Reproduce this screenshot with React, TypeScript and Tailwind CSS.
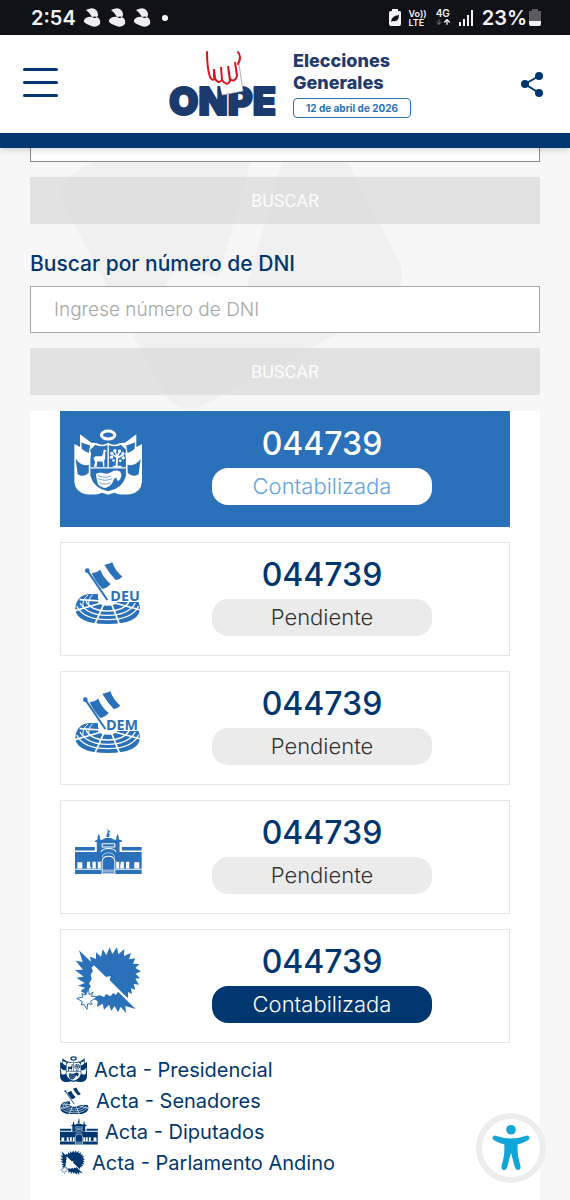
import React from 'react';
import { ArrowDown, ArrowUp } from 'lucide-react';

type IconProps = { className?: string; cut?: string };

const EscudoIcon: React.FC<IconProps> = ({ className, cut = 'fill-white' }) => {
  const line = cut === 'fill-white' ? 'stroke-white' : 'stroke-[#2a71b9]';
  return (
    <svg viewBox="60 74 203 196" className={className} fill="currentColor" aria-hidden="true">
      <ellipse cx="162" cy="92" rx="20" ry="12" fill="none" stroke="currentColor" strokeWidth="9" />
      <path d="M78 90 L112 115 L126 116 Q146 126 162 115 Q178 126 198 116 L212 115 L246 90 V128 L263 119 V232 Q260 262 228 269 Q196 272 180 264 L162 270 L144 264 Q128 272 96 269 Q64 262 61 232 V119 L78 128 Z" />
      <g className={cut}>
        <path d="M82 114 L108 123 L104 146 Q92 142 83 133 Z" />
        <path d="M242 114 L216 123 L220 146 Q232 142 241 133 Z" />
        <path d="M65 163 Q80 186 104 181 V205 Q90 220 71 209 Z" />
        <path d="M259 163 Q244 186 220 181 V205 Q234 220 253 209 Z" />
        <path d="M108 137 L124 121 Q144 131 162 120 Q180 131 200 121 L216 137 Q210 150 215 163 V214 Q204 252 162 260 Q120 252 109 214 V163 Q114 150 108 137 Z" />
      </g>
      <path d="M162 118 V190 M109 190 H215" fill="none" stroke="currentColor" strokeWidth="4" />
      <path d="M118 161 L124 155 L143 155 L147 148 L148 138 L151 135 L158 140 L153 143 L153 163 L150 168 L151 187 H147 L145 171 L129 171 L128 187 H119 L123 173 Z" />
      <path d="M184 187 L186 160 L172 151 L174 148 L185 154 L180 139 L184 138 L188 151 L196 138 L199 141 L192 155 L207 148 L209 152 L191 163 L190 187 Z" />
      <g>
        <circle cx="173" cy="147" r="5" />
        <circle cx="182" cy="139" r="5" />
        <circle cx="196" cy="140" r="5" />
        <circle cx="206" cy="148" r="5" />
        <circle cx="172" cy="158" r="5" />
        <circle cx="207" cy="160" r="5" />
        <circle cx="178" cy="168" r="4" />
        <circle cx="198" cy="169" r="4" />
        <path d="M176 184 H202 V188 H176 Z" />
      </g>
      <path d="M126 216 Q122 202 143 205 Q161 211 173 202 Q186 194 198 202 Q207 216 193 229 Q186 228 187 219 Q178 221 177 229 Q173 244 153 250 Q132 246 131 236 Q128 224 126 216 Z" />
      <path d="M130 212 Q151 224 171 214 M132 222 Q153 232 174 222 M136 234 Q155 243 170 234" fill="none" strokeWidth="2" className={line} />
    </svg>
  );
};

const SenadoIcon: React.FC<IconProps & { label?: string }> = ({ className, label }) => (
  <svg viewBox="59 62 198 190" className={className} fill="currentColor" aria-hidden="true">
    <path d="M60 206 Q62 162 108 161 H206 Q252 162 254 206 Q250 251 157 251 Q64 251 60 206 Z" />
    <g fill="none" stroke="white" strokeWidth="4">
      <path d="M64 197 Q84 238 157 238 Q230 238 250 197" />
      <path d="M74 188 Q95 225 157 225 Q219 225 240 188" />
      <path d="M92 183 Q108 212 157 212 Q206 212 222 183" />
      <path d="M84 201 Q78 180 98 164 M103 198 Q94 180 112 163" strokeWidth="3" />
      <path strokeWidth="5" d="M138 188 L58 211 M146 190 L118 253 M168 190 L193 253 M178 188 L256 209 M138 182 L73 178 M176 182 L243 181" />
    </g>
    <ellipse cx="157" cy="184" rx="29" ry="12" fill="white" />
    <path d="M126 150 H262 V185 H180 L150 190 L129 178 Z" fill="white" />
    <g transform={label === 'DEM' ? 'translate(-6 0)' : undefined}>
      <path d="M96 91 L156 179" stroke="currentColor" strokeWidth="6" />
      <circle cx="96" cy="91" r="7" />
      <path d="M109 99 Q125 97 135 88 Q144 113 166 131 Q156 143 141 146 Q120 124 109 99 Z" />
      <path d="M147 73 Q161 72 171 66 Q179 91 201 109 Q193 118 181 119 Q163 101 147 73 Z" />
    </g>
    {label && (
      <text x={label === 'DEM' ? 152 : 165} y="181" fontSize="43" className="font-bold" fontFamily="Open Sans, sans-serif">
        {label}
      </text>
    )}
  </svg>
);

const CongresoIcon: React.FC<IconProps> = ({ className }) => (
  <svg viewBox="57 81 200 140" className={className} fill="currentColor" aria-hidden="true">
    <path d="M57 138 H116 V148 H57 Z M197 138 H256 V148 H197 Z M57 153 H256 V220 H57 Z" />
    <path d="M118 118 L124 115 L125 106 L128 98 L131 106 L132 115 L137 117 Q156 103 176 117 L180 115 L181 106 L184 98 L187 106 L188 115 L197 118 V123 H190 V153 H122 V123 H116 Z" />
    <path d="M151 102 L155 92 L154 81 L157 88 L163 92 L157 96 L161 101 L158 108 H151 Z" />
    <g fill="none" stroke="white">
      <rect x="138" y="128" width="38" height="10" rx="2" strokeWidth="3" />
      <path d="M134 153 Q139 142 157 142 Q175 142 180 153" strokeWidth="3" />
      <path d="M138 168 Q142 155 157 155 Q172 155 176 168" strokeWidth="2" />
      <path d="M138 220 V180 Q140 165 157 165 Q174 165 176 180 V220" strokeWidth="3" />
      <path d="M57 204 H136 M178 204 H256" strokeWidth="3" />
      <path d="M140 207 H174 M140 212 H174 M140 217 H174" strokeWidth="2" />
    </g>
    <path
      fill="white"
      d="M64 183 H79 V202 H64 Z M93 182 H102 V194 L105 202 H92 Z M109 182 H119 V202 H109 Z M125 182 H134 V202 H125 Z M180 182 H189 V202 H180 Z M194 182 H203 V202 H192 V194 Z M209 182 H219 V202 H209 Z M234 183 H249 V202 H234 Z"
    />
  </svg>
);

const ParlamentoIcon: React.FC<IconProps> = ({ className }) => (
  <svg viewBox="58 62 198 198" className={className} fill="currentColor" aria-hidden="true">
    <path d="M106 108 L103 91 L121 98 L121 78 L136 91 L141 69 L152 86 L162 63 L170 83 L184 63 L188 84 L206 68 L205 89 L226 80 L220 99 L239 96 L232 112 L251 113 L239 125 L256 135 L240 142 L253 155 L239 157 L250 175 L234 173 L239 190 L226 186 L229 203 L217 197 L217 215 L207 207 L162 162 L165 149 L151 152 Z" />
    <path d="M70 72 L116 116 L107 124 L112 133 L105 145 L108 158 L100 172 L106 180 L98 190 L94 208 L86 201 L75 194 L88 184 L67 178 L87 170 L62 154 L84 151 L58 131 L82 130 L60 103 L81 107 Z" />
    <path d="M113 217 L131 206 L145 212 L151 203 L164 210 L173 200 L181 206 L187 196 L240 248 L209 239 L211 260 L195 241 L187 258 L177 239 L167 253 L160 235 L145 250 L141 232 L124 242 L126 225 Z" />
    <path d="M98 187 L101 206 L112 197 L107 210 L126 211 L104 225 L110 234 L96 232 L94 249 L85 234 L77 236 L80 226 L63 216 L82 212 L78 202 L90 206 Z" fill="white" stroke="currentColor" strokeWidth="3" />
  </svg>
);

const PersonIcon = () => (
  <svg viewBox="0 0 40 50" className="h-12 w-10 text-[#12a5d8]" fill="currentColor" aria-hidden="true">
    <circle cx="20" cy="6" r="5" />
    <path d="M3 12 Q20 18 37 12 Q40 13 39 16 Q34 20 27 21 Q26 31 30 44 Q30 48 27 48 Q25 48 24 45 L20 30 L16 45 Q15 48 12 48 Q10 47 10 44 Q14 31 13 21 Q6 20 1 16 Q0 13 3 12 Z" />
  </svg>
);

const BeanIcon = () => (
  <svg viewBox="0 0 18 20" className="h-5 w-[18px]" fill="#eeeef1" aria-hidden="true">
    <path d="M3 2 Q11 -2 14 3 Q16 7 14 9 Q18 11 17 16 Q13 21 6 17 Q0 15 1 12 Q4 8 9 9 Q6 4 3 2 Z" />
    <path d="M9 9 Q12 8 14 9 Q12 11 9 9 Z" fill="#111217" />
  </svg>
);

const StatusBar = () => (
  <div className="flex h-[35px] items-center justify-between bg-[#111217] pr-[29px] pl-[31px] text-[#f3f3f5]">
    <div className="flex items-center gap-[7px]">
      <span className="text-xl font-semibold">2:54</span>
      <BeanIcon />
      <BeanIcon />
      <BeanIcon />
      <span className="ml-1 h-1.5 w-1.5 rounded-full bg-white" />
    </div>
    <div className="flex items-center gap-2">
      <svg viewBox="0 0 12 17" className="h-[17px] w-3" aria-hidden="true">
        <path d="M3 0 H9 V2 H11 Q12 2 12 4 V15 Q12 17 10 17 H2 Q0 17 0 15 V4 Q0 2 2 2 H3 Z" fill="#f3f3f5" />
        <path d="M2 13 Q2 7 10 6 Q10 13 4 12 M3 13 L7 9" fill="#111217" />
      </svg>
      <div className="text-[9px] leading-[9px] font-semibold">
        <div>Vo))</div>
        <div>LTE</div>
      </div>
      <div className="flex flex-col items-center text-[10px] leading-[9px] font-semibold">
        <span>4G</span>
        <span className="flex">
          <ArrowDown size={8} className="text-gray-400" />
          <ArrowUp size={8} strokeWidth={4} />
        </span>
      </div>
      <svg viewBox="0 0 15 16" className="h-4 w-[15px]" fill="#f3f3f5" aria-hidden="true">
        <path d="M0 12 h2 v4 h-2 Z M4 9 h2 v7 h-2 Z M8 5 h2 v11 h-2 Z M12 0 h2 v16 h-2 Z" />
      </svg>
      <div className="flex items-center gap-0.5">
        <span className="text-xl font-semibold">23%</span>
        <svg viewBox="0 0 12 17" className="h-[17px] w-3" aria-hidden="true">
          <path d="M3 0 H9 V2 H12 V13 H0 V2 H3 Z" fill="#5c5c60" />
          <path d="M0 12 H12 V15 Q12 17 10 17 H2 Q0 17 0 15 Z" fill="#f3f3f5" />
        </svg>
      </div>
    </div>
  </div>
);

const Header = () => (
  <header className="relative z-10 flex h-[113px] items-center justify-between border-b-[15px] border-[#003770] bg-white px-[23px] shadow-md">
    <button type="button" aria-label="Menú" className="flex w-[35px] flex-col gap-2.5 pb-1">
      <span className="h-[3px] rounded-full bg-[#003770]" />
      <span className="h-[3px] rounded-full bg-[#003770]" />
      <span className="h-[3px] rounded-full bg-[#003770]" />
    </button>
    <a href="#inicio" className="flex items-center gap-2.5 text-[#1f3a6b]">
      <svg viewBox="0 -8 115 88" className="h-[88px] w-[115px]" role="img" aria-label="ONPE">
        <text x="1" y="67" fontSize="38" fill="#1b3b6f" stroke="#1b3b6f" strokeWidth="2" strokeLinejoin="round" className="font-black" fontFamily="Inter, sans-serif">
          ONPE
        </text>
        <path d="M51 33 L71 16 L75 43 L54 47 Z" fill="white" />
        <path d="M71 16 L75 43 L54 47" fill="none" stroke="#a9adb5" strokeWidth="1" />
        <path
          d="M39 4 Q39 20 42 29 Q45 34 47 30 L46 21 V29 Q50 37 54 32 L53 19 L54 32 Q59 39 62 33 L60 18 L62 31 Q67 35 69 28 L67 14 L69 28 M70 4 Q74 9 70 16"
          fill="none"
          stroke="#d9141e"
          strokeWidth="2"
          strokeLinecap="round"
        />
      </svg>
      <div>
        <div className="text-lg leading-[22px] font-extrabold">
          Elecciones
          <br />
          Generales
        </div>
        <div className="mt-1 rounded border border-[#2a71b9] px-3 text-[10px] leading-[18px] font-bold whitespace-nowrap text-[#2a71b9]">
          12 de abril de 2026
        </div>
      </div>
    </a>
    <button type="button" aria-label="Compartir" className="mr-1 text-[#003770]">
      <svg viewBox="0 0 22 25" className="h-[25px] w-[22px]" fill="currentColor" aria-hidden="true">
        <path d="M18 4 L4 12 L18 21" fill="none" stroke="currentColor" strokeWidth="2" />
        <circle cx="18" cy="4" r="4" />
        <circle cx="4" cy="12" r="4" />
        <circle cx="18" cy="21" r="4" />
      </svg>
    </button>
  </header>
);

const BuscarButton = () => (
  <button type="button" className="block h-[47px] w-full bg-[#dcdcdc]/80 font-[Roboto] text-lg text-white/90">
    BUSCAR
  </button>
);

const actas = [
  {
    icon: <EscudoIcon className="w-[68px]" cut="fill-[#2a71b9]" />,
    estado: 'Contabilizada',
    card: 'bg-[#2a71b9] border-[#2a71b9] text-white',
    pill: 'bg-white text-[#64a3dc]'
  },
  {
    icon: <SenadoIcon className="w-[66px]" label="DEU" />,
    estado: 'Pendiente',
    card: 'bg-white border-[#e6e6e6] text-[#003770]',
    pill: 'bg-[#ebebeb] text-[#333333]'
  },
  {
    icon: <SenadoIcon className="w-[66px]" label="DEM" />,
    estado: 'Pendiente',
    card: 'bg-white border-[#e6e6e6] text-[#003770]',
    pill: 'bg-[#ebebeb] text-[#333333]'
  },
  {
    icon: <CongresoIcon className="w-[67px]" />,
    estado: 'Pendiente',
    card: 'bg-white border-[#e6e6e6] text-[#003770]',
    pill: 'bg-[#ebebeb] text-[#333333]'
  },
  {
    icon: <ParlamentoIcon className="w-[66px]" />,
    estado: 'Contabilizada',
    card: 'bg-white border-[#e6e6e6] text-[#003770]',
    pill: 'bg-[#003770] text-white'
  }
];

const leyenda = [
  { icon: <EscudoIcon className="w-[27px]" />, label: 'Acta - Presidencial' },
  { icon: <SenadoIcon className="w-[29px]" />, label: 'Acta - Senadores' },
  { icon: <CongresoIcon className="w-[38px]" />, label: 'Acta - Diputados' },
  { icon: <ParlamentoIcon className="w-[25px]" />, label: 'Acta - Parlamento Andino' }
];

const App: React.FC = () => {
  return (
    <div className="flex min-h-screen flex-col bg-[#f7f7f7] font-[Inter,sans-serif]">
      <StatusBar />
      <Header />

      <main className="relative flex flex-1 flex-col px-[30px]">
        <svg viewBox="0 0 342 262" className="absolute top-0 left-[61px] w-[342px] fill-[#f0f0f0]" aria-hidden="true">
          <path d="M54 0 L12 26 Q-4 37 2 56 L73 189 L106 248 Q120 268 141 258 L276 186 L330 150 Q346 138 339 116 L279 0 Z" />
          <path d="M194 0 H225 L186 138 H104 L117 120 L157 130 Z" className="fill-[#f7f7f7]" />
        </svg>

        <div className="relative">
          <input type="text" aria-label="Buscar" className="-mt-[33px] block h-[47px] w-full border border-[#8a8a8a] bg-white px-[23px]" />
          <div className="mt-[15px]">
            <BuscarButton />
          </div>
          <label htmlFor="dni" className="mt-6 mb-1.5 block text-[21px] leading-8 font-medium text-[#003770]">
            Buscar por número de DNI
          </label>
          <input
            id="dni"
            type="text"
            placeholder="Ingrese número de DNI"
            className="block h-[47px] w-full border border-[#a8a8a8] bg-white px-[23px] text-[19px] font-light placeholder:text-[#a8a8a8]"
          />
          <div className="mt-[15px]">
            <BuscarButton />
          </div>
        </div>

        <section className="relative mt-4 flex-1 bg-white px-[30px] pb-4">
          <div className="flex flex-col gap-[15px]">
            {actas.map((acta, index) => (
              <div key={index} className={`flex h-[114px] items-start gap-1.5 border px-[13px] first:h-[116px] ${acta.card}`}>
                <div className={`flex h-[100px] w-[68px] shrink-0 items-center justify-center ${index === 0 ? 'text-white' : 'text-[#2a71b9]'}`}>
                  {acta.icon}
                </div>
                <div className="flex flex-1 flex-col items-center pt-3">
                  <div className="mb-1 text-[32px] leading-10 font-medium">044739</div>
                  <div className={`w-[220px] rounded-2xl text-center text-[22px] leading-[37px] font-light ${acta.pill}`}>
                    {acta.estado}
                  </div>
                </div>
              </div>
            ))}
          </div>

          <ul className="mt-[11px] text-[#003770]">
            {leyenda.map((item) => (
              <li key={item.label} className="flex h-[31px] items-center gap-[7px] text-xl">
                {item.icon}
                {item.label}
              </li>
            ))}
          </ul>
        </section>
      </main>

      <button
        type="button"
        aria-label="Accesibilidad"
        className="fixed right-6 bottom-[17px] z-20 flex h-[70px] w-[70px] items-center justify-center rounded-full border-[6px] border-[#ededed] bg-white"
      >
        <PersonIcon />
      </button>
    </div>
  );
};

export default App;
